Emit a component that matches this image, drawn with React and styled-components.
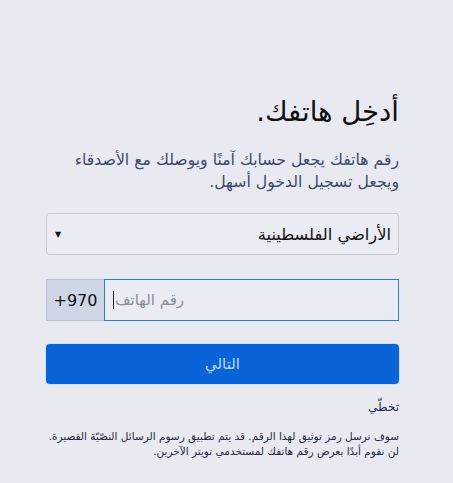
import React from "react";
import styled, { createGlobalStyle } from "styled-components";

const Global = createGlobalStyle`
  html, body { margin: 0; padding: 0; background: #e9e9f1; }
  body { font-family: "DejaVu Sans", "Noto Sans", sans-serif; }
`;

const Page = styled.div`
  direction: rtl;
  width: 353px;
  margin-left: 46px;
  padding-top: 91px;
  display: flex;
  flex-direction: column;
`;

const Title = styled.h1`
  margin: 0;
  font-size: 27.5px;
  font-weight: normal;
  color: #111;
  line-height: 40px;
`;

const Lead = styled.p`
  margin: 18px 0 0;
  font-size: 15.7px;
  line-height: 22px;
  color: #3c4b6b;
`;

const Select = styled.div`
  margin-top: 20px;
  height: 40px;
  border: 1px solid #c7c8d2;
  border-radius: 3px;
  background: #ebebf3;
  display: flex;
  align-items: center;
  justify-content: space-between;
  padding: 0 7px 0 8px;
  font-size: 16.3px;
  color: #111;
`;

const Arrow = styled.span`
  font-size: 8px;
  color: #111;
`;

const PhoneRow = styled.div`
  margin-top: 24px;
  display: flex;
  direction: ltr;
  height: 42px;
`;

const Prefix = styled.div`
  width: 58px;
  box-sizing: border-box;
  background: #cfd6e6;
  border: 1px solid #b9bfcc;
  border-right: none;
  display: flex;
  align-items: center;
  justify-content: center;
  font-size: 16px;
  color: #111;
`;

const Input = styled.div`
  flex: 1;
  box-sizing: border-box;
  border: 1px solid #2a7fcf;
  background: #ebebf3;
  display: flex;
  align-items: center;
  padding-left: 8px;
  font-size: 15px;
  color: #8a8f9c;
`;

const Caret = styled.span`
  display: inline-block;
  width: 1px;
  height: 18px;
  background: #222;
  margin-right: 1px;
`;

const Button = styled.div`
  margin-top: 23px;
  height: 40px;
  border-radius: 4px;
  background: #0a64d8;
  box-shadow: 0 0 0 1px #c9e2fa;
  display: flex;
  align-items: center;
  justify-content: center;
  font-size: 15px;
  color: #b9d9f7;
`;

const Skip = styled.div`
  margin-top: 16px;
  font-size: 12px;
  color: #1c2b4c;
`;

const Note = styled.p`
  margin: 15px 0 0;
  font-size: 10.5px;
  line-height: 15px;
  color: #1f2a3e;
`;

export default function App() {
  return (
    <>
      <Global />
      <Page>
        <Title>أدخِل هاتفك.</Title>
        <Lead>
          رقم هاتفك يجعل حسابك آمنًا ويوصلك مع الأصدقاء
          <br />
          ويجعل تسجيل الدخول أسهل.
        </Lead>
        <Select>
          <span>الأراضي الفلسطينية</span>
          <Arrow>▼</Arrow>
        </Select>
        <PhoneRow>
          <Prefix>+970</Prefix>
          <Input>
            <Caret />
            <span dir="rtl">رقم الهاتف</span>
          </Input>
        </PhoneRow>
        <Button>التالي</Button>
        <Skip>تخطّي</Skip>
        <Note>
          سوف نرسل رمز توثيق لهذا الرقم. قد يتم تطبيق رسوم الرسائل النصّيّة القصيرة.
          <br />
          لن نقوم أبدًا بعرض رقم هاتفك لمستخدمي تويتر الآخرين.
        </Note>
      </Page>
    </>
  );
}
